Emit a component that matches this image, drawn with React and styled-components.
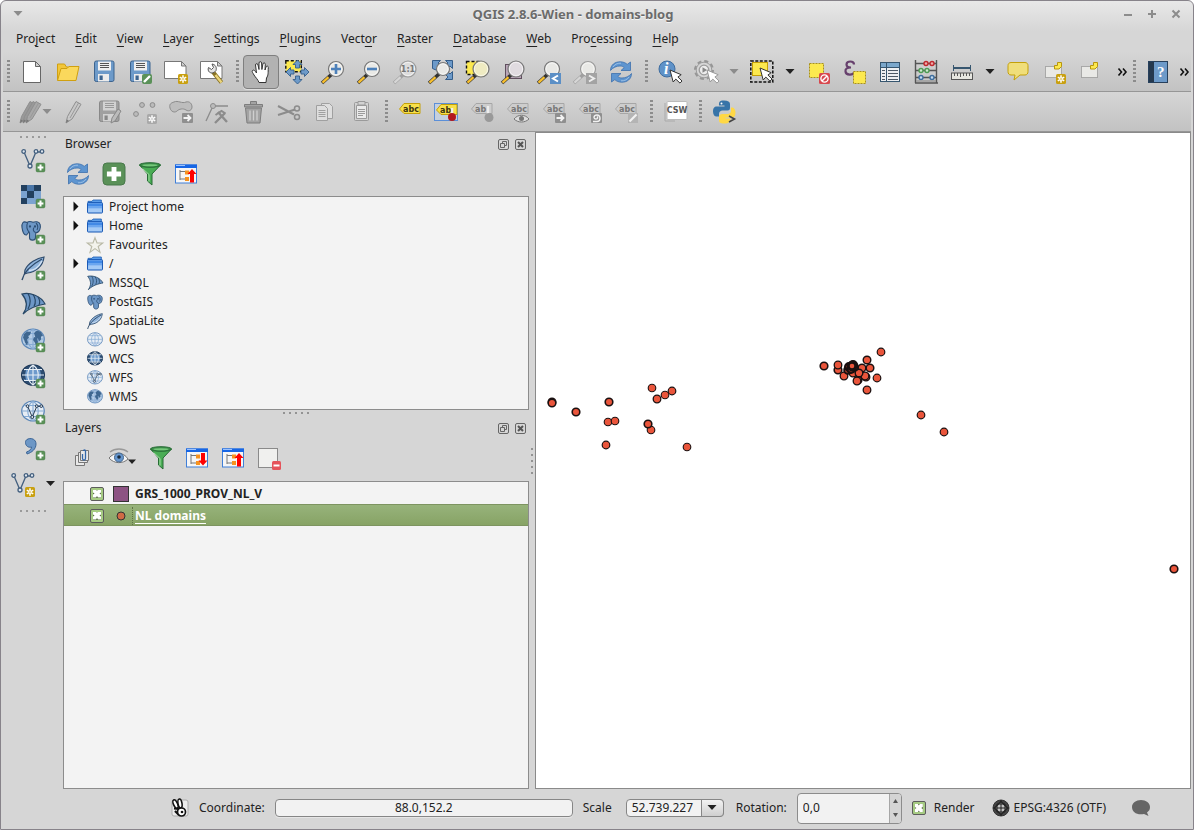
import React, { useState } from "react";
import styled, { createGlobalStyle } from "styled-components";

const GlobalStyle = createGlobalStyle`
  * {
    box-sizing: border-box;
  }

  body {
    margin: 0;
    background: #ffffff;
    color: #222222;
    font-family: "Noto Sans", sans-serif;
    font-size: 12px;
    line-height: 18px;
  }

  button,
  input,
  select {
    margin: 0;
    padding: 0;
    color: inherit;
    font: inherit;
  }
`;

const Window = styled.div`
  display: flex;
  flex-direction: column;
  min-height: 100vh;
  padding: 0 2px;
  border: 1px solid #87838a;
  border-radius: 6px 6px 0 0;
  background: linear-gradient(#e8e8e8, #d6d6d6 30px);
`;

const PlainButton = styled.button`
  display: flex;
  align-items: center;
  justify-content: center;
  border: none;
  background: none;
`;

const TitleBar = styled.header`
  display: flex;
  align-items: center;
  height: 25px;
  padding: 0 3px;
`;

const Title = styled.h1`
  flex: 1;
  margin: 0;
  color: #6b6b6b;
  font-size: 13px;
  font-weight: 700;
  line-height: 18px;
  text-align: center;
  text-shadow: 0 1px 0 #f4f4f4;
`;

const WindowButton = styled(PlainButton)`
  width: 24px;
  height: 24px;
`;

const MenuBar = styled.nav`
  display: flex;
  align-items: center;
  height: 26px;
  padding: 0 3px;
`;

const MenuButton = styled(PlainButton)`
  padding: 0 10px;

  u {
    text-underline-offset: 3px;
  }
`;

const Toolbar = styled.div`
  display: flex;
  align-items: center;
  gap: 2px;
  height: 40px;
  padding: 1px 2px 0 0;
  border-bottom: 1px solid #969696;
  background: linear-gradient(#d6d6d6, #c2c2c2);
`;

const ToolGroup = styled.div`
  display: flex;
  align-items: center;
`;

const GroupHandle = styled.span`
  width: 11px;
  height: 34px;
  padding: 5px 4px;
  background: repeating-linear-gradient(#8c8c8c 0 2px, transparent 2px 4px) content-box;
`;

const SideHandle = styled.span`
  width: 34px;
  height: 10px;
  padding: 4px;
  background: repeating-linear-gradient(90deg, #9a9a9a 0 2px, transparent 2px 6px) content-box;

  &:last-child {
    margin-top: 4px;
  }
`;

const ToolButton = styled(PlainButton)`
  width: ${(props) => props.$width || 36}px;
  height: 34px;
  border: 1px solid ${(props) => (props.$pressed ? "#7f7f7f" : "transparent")};
  border-radius: 4px;
  background: ${(props) => (props.$pressed ? "#b2b2b2" : "none")};
  box-shadow: ${(props) => (props.$pressed ? "0 1px 0 #dedede" : "none")};
`;

const MoreButton = styled(PlainButton)`
  justify-content: flex-end;
  width: ${(props) => (props.$short ? "14px" : "19px")};
  margin-left: ${(props) => (props.$short ? "auto" : "0")};
`;

const Svg = styled.svg`
  display: block;
  flex: none;
  width: ${(props) => props.$w || 24}px;
  height: ${(props) => props.$h || 24}px;
  overflow: visible;
`;

const Main = styled.main`
  display: flex;
  flex: 1;
`;

const SideBar = styled.aside`
  display: flex;
  flex-direction: column;
  align-items: center;
  width: 60px;
`;

const SideButton = styled(PlainButton)`
  width: 60px;
  height: 36px;
`;

const Docks = styled.div`
  display: flex;
  flex-direction: column;
  width: 466px;
`;

const Dock = styled.section`
  display: flex;
  flex-direction: column;
  flex: ${(props) => (props.$grow ? 1 : "none")};
`;

const DockTitle = styled.div`
  display: flex;
  align-items: center;
  gap: 6px;
  height: 24px;
  padding: 0 3px 0 2px;

  h2 {
    flex: 1;
    margin: 0;
    font-size: 12px;
    font-weight: 400;
  }
`;

const DockTools = styled.div`
  display: flex;
  align-items: center;
  gap: 6px;
  height: 36px;
  margin-bottom: ${(props) => (props.$inset ? "5px" : "4px")};
  padding-left: ${(props) => (props.$inset ? "4px" : "0")};
`;

const Tree = styled.ul`
  flex: ${(props) => (props.$grow ? 1 : "none")};
  margin: 0;
  padding: 0 0 3px;
  border: 1px solid #8c8c8c;
  background: #f3f3f3;
  list-style: none;
`;

const TreeRow = styled.li`
  display: flex;
  align-items: center;
  height: 19px;
  padding-left: 8px;
`;

const Expander = styled.span`
  display: flex;
  align-items: center;
  width: 15px;
`;

const TreeLabel = styled.span`
  padding-left: 6px;
`;

const LayerRow = styled.li`
  height: 22px;
  border: 1px solid ${(props) => (props.$selected ? "#7d9460" : "transparent")};
  border-width: 1px 0;
  background: ${(props) =>
    props.$selected ? "linear-gradient(#97b37b, #87a365)" : "none"};
  color: ${(props) => (props.$selected ? "#ffffff" : "#222222")};
  font-weight: 700;
  text-decoration: ${(props) => (props.$selected ? "underline" : "none")};
  text-underline-offset: 3px;

  label {
    display: flex;
    align-items: center;
    height: 21px;
    padding-left: 26px;
  }
`;

const LayerName = styled.span`
  flex: 1;
  padding-left: 2px;
  border-left: 1px dotted ${(props) => (props.$selected ? "#5f7346" : "transparent")};
`;

const Symbol = styled(Svg)`
  margin: 0 3px 0 9px;
`;

const CheckBox = styled.input`
  display: grid;
  flex: none;
  place-items: center;
  width: 14px;
  height: 14px;
  border: 1px solid #5c5c5c;
  border-radius: 2px;
  background: #a6cb83;
  appearance: none;

  &:checked::before {
    content: "";
    grid-area: 1 / 1;
    width: 8px;
    height: 8px;
    background: #5a6f45;
  }

  &:checked::after {
    content: "";
    grid-area: 1 / 1;
    width: 8px;
    height: 8px;
    background: #ffffff;
    clip-path: polygon(0 0, 38% 0, 50% 20%, 62% 0, 100% 0, 100% 38%, 80% 50%, 100% 62%, 100% 100%, 62% 100%, 50% 80%, 38% 100%, 0 100%, 0 62%, 20% 50%, 0 38%);
  }
`;

const RowSplitter = styled.div`
  display: flex;
  align-items: center;
  justify-content: center;
  height: 6px;
`;

const ColumnSplitter = styled.div`
  display: flex;
  align-items: center;
  justify-content: center;
  width: 6px;
`;

const SplitterDots = styled.span`
  width: ${(props) => (props.$vertical ? "2px" : "26px")};
  height: ${(props) => (props.$vertical ? "26px" : "2px")};
  background: repeating-linear-gradient(
    ${(props) => (props.$vertical ? "180deg" : "90deg")},
    #939393 0 2px,
    transparent 2px 6px
  );
`;

const MapCanvas = styled.section`
  flex: 1;
  min-width: 0;
  border: 1px solid #8a8a8a;
  background: #ffffff;

  svg {
    display: block;
    width: 100%;
    height: 100%;
  }
`;

const StatusBar = styled.footer`
  display: flex;
  align-items: center;
  justify-content: flex-end;
  gap: 10px;
  height: 40px;
  padding: 0 40px 2px 10px;

  label {
    white-space: nowrap;
  }
`;

const CoordinateInput = styled.input`
  width: 298px;
  height: 18px;
  border: 1px solid #868686;
  border-radius: 4px;
  background: #f2f2f2;
  box-shadow: 0 1px 0 #e6e6e6;
  text-align: center;
`;

const Combo = styled.div`
  display: grid;
  width: 98px;
  height: 18px;
  margin: 0 2px 0 4px;
`;

const ComboSelect = styled.select`
  grid-area: 1 / 1;
  width: 100%;
  height: 18px;
  padding-left: 5px;
  border: 1px solid #868686;
  border-radius: 4px;
  background: #f2f2f2;
  line-height: 16px;
  appearance: none;
`;

const ComboArrow = styled.span`
  display: grid;
  grid-area: 1 / 1;
  place-items: center;
  justify-self: end;
  width: 23px;
  height: 18px;
  border: 1px solid #868686;
  border-radius: 0 4px 4px 0;
  background: linear-gradient(#f2f2f2, #cfcfcf);
  pointer-events: none;
`;

const SpinBox = styled.div`
  display: flex;
  width: 105px;
  height: 31px;
  border: 1px solid #8c8c8c;
  border-radius: 4px;
  background: #f2f2f2;
  overflow: hidden;

  input {
    flex: 1;
    min-width: 0;
    padding-left: 5px;
    border: none;
    background: none;
  }
`;

const SpinButtons = styled.div`
  display: flex;
  flex-direction: column;
  width: 12px;
  border-left: 1px solid #a6a6a6;
  background: #d4d4d4;
`;

const SpinButton = styled(PlainButton)`
  flex: 1;
`;

const CheckLabel = styled.label`
  display: flex;
  align-items: center;
  gap: 8px;
`;

const StatusButton = styled(PlainButton)`
  gap: 4px;
  margin: ${(props) => (props.$spaced ? "0 15px 0 7px" : "0")};
`;

/* shared icon parts */

const PlusBadge = ({ x = 15, y = 15, size = 9 }) => (
  <g transform={`translate(${x} ${y}) scale(${size / 9})`}>
    <rect width="9" height="9" rx="1.6" fill="#5a9158" stroke="#47784a" strokeWidth=".4" />
    <path d="M4.5 1.6v5.800M1.600 4.500h5.800" stroke="#fff" strokeWidth="2" />
  </g>
);

const StarBadge = ({ x = 14, y = 14, gray }) => (
  <g transform={`translate(${x} ${y})`}>
    <rect width="10" height="10" rx="1.6" fill={gray ? "#a9a9a9" : "#c9a010"} />
    <path d="M5 1.3v7.4M1.8 3.1l6.4 3.8M8.2 3.1L1.8 6.9" stroke="#fff" strokeWidth="1.5" />
    <circle cx="5" cy="5" r=".8" fill={gray ? "#a9a9a9" : "#c9a010"} />
  </g>
);

const Cursor = ({ x, y, gray }) => (
  <path
    transform={`translate(${x} ${y})`}
    d="M0 0l3.2 12 2.6-2.9 4.2 4 2-2.1-4.1-4 3.3-2.3z"
    fill="#fff"
    stroke={gray ? "#9a9a9a" : "#333"}
    strokeWidth="1"
    strokeLinejoin="round"
  />
);

const Lens = ({ cx = 15, cy = 9, r = 7.5, gray, fill = "#e9e9e6" }) => (
  <g>
    <path
      d={`M${cx - 4} ${cy + 5}L${cx - 14} ${cy + 14}`}
      stroke={gray ? "#a0a0a0" : "#333"}
      strokeWidth="3.6"
    />
    <path
      d={`M${cx - 7.5} ${cy + 8.2}L${cx - 13.5} ${cy + 13.6}`}
      stroke={gray ? "#d6d6d6" : "#f8bf2c"}
      strokeWidth="2.4"
    />
    <circle cx={cx} cy={cy} r={r} fill={fill} stroke={gray ? "#9b9b9b" : "#777"} strokeWidth="1.2" />
    <circle cx={cx} cy={cy} r={r - 1.4} fill="none" stroke="#fff" strokeOpacity=".6" />
  </g>
);

const Refresh = () => (
  <g fill="#5e95d0" stroke="#3c70ad" strokeWidth=".8" strokeLinejoin="round">
    <path d="M1.5 10.5C1.5 4.8 6 1.8 11 1.8c3.2 0 5.6 1 7.2 2.6L21.5 2v8.5H12l3.2-2.9C14 6.4 12.7 6 11 6 7.4 6 4 7.5 1.5 10.5z" />
    <path d="M22.5 13.5c0 5.7-4.5 8.7-9.5 8.7-3.2 0-5.6-1-7.2-2.6L2.5 22v-8.5H12l-3.2 2.9c1.2 1.2 2.5 1.6 4.2 1.6 3.6 0 7-1.5 9.5-4.5z" />
    <path d="M4 7C6 4 9 3 12 3.2M20 17c-2 3-5 4-8 3.8" fill="none" stroke="#a9c9ea" />
  </g>
);

const Floppy = ({ gray }) => (
  <g>
    <rect x="2.5" y="1" width="19.5" height="20.5" rx="1.8" fill={gray ? "#a0a0a0" : "#6d9ac9"} stroke={gray ? "#888" : "#3d648f"} />
    <rect x="6" y="1.5" width="13" height="9" fill={gray ? "#d2d2d2" : "#f0f0f0"} />
    <path d="M8 3.500h9M8 5.500h9M8 7.500h9" stroke={gray ? "#999" : "#555"} />
    <rect x="6" y="14" width="11" height="7.5" fill={gray ? "#d2d2d2" : "#ececec"} />
    <rect x="7.5" y="15.5" width="3.2" height="4.5" fill={gray ? "#888" : "#3d648f"} />
  </g>
);

const Pencil = ({ x = 0, fill = "#c8c8c8" }) => (
  <g transform={`translate(${x} 0)`}>
    <path d="M2 23l1.500-6.500L12 1.500l5 2.800L8 19z" fill={fill} stroke="#8f8f8f" />
    <path d="M14.500 3L6 18" stroke="#999" />
    <path d="M2 23l.8-3.500 2.200 1.300z" fill="#777" />
  </g>
);

const Vertices = ({ x = 0, y = 0, color = "#44607f", scale = 1 }) => (
  <g transform={`translate(${x} ${y}) scale(${scale})`} fill="#dfe6ee" stroke={color} strokeWidth="1.3">
    <path d="M3 4l6 14 6-14h6" fill="none" />
    <circle cx="2.7" cy="3.5" r="1.8" />
    <circle cx="9" cy="18" r="2" />
    <circle cx="15" cy="3.5" r="1.8" />
    <circle cx="21" cy="3.5" r="1.8" />
  </g>
);

const Globe = ({ dark, land, vertices }) => (
  <g>
    <ellipse
      cx="12"
      cy="11"
      rx="11.3"
      ry="10"
      fill={dark ? "#6d9acb" : land ? "#b5cce5" : "#e6edf5"}
      stroke={dark ? "#1f3a5a" : "#5e88b8"}
      strokeWidth={dark ? 1.5 : 1.2}
    />
    {dark && <path d="M5 3.500Q12-1 19 3.500L21 6H3zM3 16h18l-2 2.500Q12 23 5 18.500zM1 7l4-1-1 5 1 5-4-2zM23 7l-4-1 1 5-1 5 4-2z" fill="#2c4c70" />}
    <path
      d="M1 11h22M3 5.500h18M3 16.500h18M12 1v20M12 1C5 6 5 16 12 21M12 1c7 5 7 15 0 20"
      fill="none"
      stroke={dark ? "#e6eef6" : "#86abd4"}
      strokeWidth="1.1"
    />
    {land && (
      <path
        d="M3 6l3-2.500 4 .5-1 3-2 1 1 1.500-2 2 1 3-1 3-2-3-1-3-1-2zM13 5l3-2.500 4 1.500 2 4-2 .5 0 3-2 2-1-3-2 0-1-2zM13 9l3 1 1 4-2 3-1.500-3-1.500-2z"
        fill="#3f6790"
      />
    )}
    {vertices && <Vertices x={4.5} y={3.5} scale={0.75} color="#22384f" />}
  </g>
);

const Elephant = () => (
  <g fill="#6d97c6" stroke="#2d4f75" strokeWidth="1.1" strokeLinejoin="round">
    <path d="M6 2.500C2 .5 .5 3.500 1 7.500s2 8 4.500 7.500L8 12l.5 1v4.500c0 3.500 6 3.500 6 0l.3-5c2 .5 3-.5 4-3C20 6 19.500 2.500 16 1.800c-2-.3-3 0-4 .5-2-1-4.500-1-6 .200z" />
    <path d="M6.500 3C5 6 6 10 8 12M14.500 12.500c-2-1-3-3-1.500-5M15 3c2 2 2 5 1 7" fill="none" />
    <circle cx="9" cy="6.500" r=".6" fill="#1f3a5a" />
    <circle cx="14" cy="6.500" r=".6" fill="#1f3a5a" />
  </g>
);

const Feather = () => (
  <g>
    <path d="M23 1C16 2 7 7 4 14l-.5 4 3-1C14 16 22 11 23 1z" fill="#8fb3db" stroke="#2f4b6b" strokeWidth="1.2" />
    <path d="M1 24c2-8 9-15 20-21" fill="none" stroke="#2f4b6b" strokeWidth="1.4" />
    <path d="M8 14.500c5 0 10-4 13-9.500" fill="none" stroke="#d5e3f2" strokeWidth="1.3" />
  </g>
);

const Sail = () => (
  <g fill="#6d97c6" stroke="#274766" strokeWidth="1.2">
    <path d="M1 2c8-2 19 2 23 10-6 1-15 3-22 10 5-7 4-14-1-20z" />
    <path d="M7 1.500c3 5 3 10 0 15.500M12 2.500c3 4 3 8 1 12M17 5c2 3 2 6 1 8" fill="none" />
  </g>
);

const Funnel = () => (
  <g stroke="#276b35" strokeLinejoin="round">
    <path d="M1.500 3l8 9v7l4.500 4V12l8.500-9z" fill="#4aad55" />
    <path d="M4.500 6.500l6.500 6v7" fill="none" stroke="#a6dea6" />
    <ellipse cx="12" cy="3" rx="10.5" ry="2.3" fill="#3c8f49" />
    <ellipse cx="12" cy="3.2" rx="7.5" ry="1" fill="#77c97c" stroke="none" />
  </g>
);

const PanelTree = ({ up }) => (
  <g>
    <rect x="1.5" y="3" width="21" height="18" fill="#f6f6f6" stroke="#3f7fd8" />
    <path d="M1 2.500h22v3.500H1z" fill="#1766e5" />
    <path d="M2 3.500h9" stroke="#9cc3ff" />
    <path d="M6 8v10M6 9.500h5M6 17h5" fill="none" stroke="#777" />
    <path d="M11 8.500h4v4h-4zM11 15h4v4h-4z" fill="#f7931e" />
    {up ? (
      <path d="M18 7l4.500 5H20v8.500h-4V12h-2.500z" fill="#f00" />
    ) : (
      <path d="M18 19.500l4.500-5H20V7h-4v7.500h-2.500z" fill="#f00" />
    )}
  </g>
);

const Tag = ({ gray, label = "abc" }) => (
  <g>
    <path
      d="M1.500 9L6 3.500h16v10H6z"
      fill={gray ? "#cdcdcd" : "#f7e04a"}
      stroke={gray ? "#a6a6a6" : "#c4a008"}
      strokeLinejoin="round"
    />
    <text x="5" y="11.500" fontFamily="DejaVu Sans, sans-serif" fontSize="8" fontWeight="700" fill={gray ? "#777" : "#3a3410"}>
      {label}
    </text>
  </g>
);

const GrayBadge = ({ children }) => (
  <g transform="translate(13 13)">
    <rect width="11" height="10" rx="1" fill="#8f8f8f" />
    <g fill="none" stroke="#f2f2f2" strokeWidth="1.8">
      {children}
    </g>
  </g>
);

const YellowPatch = ({ x, y, size }) => (
  <rect x={x} y={y} width={size} height={size} fill="#fce94f" stroke="#a8911a" strokeDasharray="2 1" />
);

const NoteBox = () => (
  <g>
    <rect x="3.5" y="6.5" width="16" height="11" fill="#e9e9e6" stroke="#777" strokeDasharray="1 1" />
    <path d="M12.500 5.500h3v-3h4v4l-2.500 2.500h-4.500z" fill="#fce94f" stroke="#b8960c" />
  </g>
);

const icons = {
  newFile: <path d="M3.500 1.500h12l5 5v16h-17zM15.500 1.500v5h5" fill="#fff" stroke="#666" />,
  open: (
    <g stroke="#d0a010">
      <path d="M1.500 20V4h7l2 3h9v3z" fill="#f2c63a" />
      <path d="M1.500 20.500L5 8.500h6l2-2h10l-3 14z" fill="#fad85c" />
    </g>
  ),
  save: <Floppy />,
  saveAs: (
    <g>
      <Floppy />
      <rect x="14" y="14" width="10" height="10" rx="2" fill="#5a9158" />
      <path d="M16 22l6-6" stroke="#fff" strokeWidth="2.4" />
    </g>
  ),
  composer: (
    <g>
      <path d="M.5 1.500h17L22 6v12.500H.5zM17.500 1.500V6H22" fill="#fff" stroke="#777" />
      <StarBadge />
    </g>
  ),
  composerManager: (
    <g>
      <path d="M.5 1.500h17L22 6v12.500H.5zM17.500 1.500V6H22" fill="#fff" stroke="#777" />
      <path d="M13 12l8.500 10.500" stroke="#8a7425" strokeWidth="4.2" />
      <path d="M15.500 15l6 7.500" stroke="#ecd57a" strokeWidth="2.4" />
      <path d="M8.500 7.500c-1.500 4 2 6.500 5.500 5l2-2c1-3-.5-6-4-6.500l1.500 3.500-2 2z" fill="#e4e4e4" stroke="#555" />
    </g>
  ),
  hand: (
    <path
      d="M10 22.500c-1-3-3.500-5-5-7.500-1-2-2.500-3.500-1.500-4.500s2.500 0 4 2.500L6.500 5c0-1.800 2.300-1.800 2.500 0l1 4.500V3c0-1.800 2.500-1.800 2.600 0l.3 6.500 1-5.500c.2-1.600 2.500-1.400 2.400.2L16 10l1-3c.5-1.500 2.500-1 2.300.5C19 13 19.500 15 17.500 18l-.5 4.500z"
      fill="#fff"
      stroke="#333"
      strokeLinejoin="round"
    />
  ),
  panSelection: (
    <g>
      <rect x=".8" y=".8" width="15.5" height="11" fill="#fce94f" stroke="#111" strokeWidth="1.4" strokeDasharray="3 2" />
      <path
        d="M12.500 0L17 4.500h-2.500V8h-4V4.500H8zM12.500 24l4.500-4.500h-2.500V16h-4v3.500H8zM1 12l4.500-4.500V10H9v4H5.500v2.500zM24 12l-4.500-4.500V10H16v4h3.500v2.500z"
        fill="#6d9ac9"
        stroke="#345d8a"
        strokeWidth=".9"
      />
    </g>
  ),
  zoomIn: (
    <g>
      <Lens />
      <path d="M15 4v10M10 9h10" stroke="#4c80ba" strokeWidth="2.6" />
    </g>
  ),
  zoomOut: (
    <g>
      <Lens />
      <path d="M10 9h10" stroke="#4c80ba" strokeWidth="2.6" />
    </g>
  ),
  zoomNative: (
    <g>
      <Lens gray r={8} fill="#dcdcdc" />
      <text x="15" y="12" textAnchor="middle" fontFamily="DejaVu Sans, sans-serif" fontSize="8" fontWeight="700" fill="#777">
        1:1
      </text>
    </g>
  ),
  zoomFull: (
    <g>
      <path
        d="M3.500.5h8L9 3l5 5 5-5-2.500-2.500h7v8L21 6l-4 4 4 4 2.500-2.500v8h-7L19 17l-5-5-7-2-3.500-1.500z"
        fill="#6d9ac9"
        stroke="#345d8a"
      />
      <Lens cx={14} r={6.5} />
    </g>
  ),
  zoomSelection: (
    <g>
      <rect x="1.5" y="1.5" width="13" height="13" fill="#fce94f" stroke="#111" strokeWidth="1.4" strokeDasharray="3 2" />
      <Lens cx={16} r={8} fill="#efebc2" />
    </g>
  ),
  zoomLayer: (
    <g>
      <rect x="4.5" y="4.5" width="16" height="14" fill="#b9a6b8" stroke="#5f4f5e" />
      <Lens r={8} fill="#e0dbe0" />
    </g>
  ),
  zoomLast: (
    <g>
      <Lens />
      <rect x="13" y="13" width="11" height="11" fill="#5b8fc6" />
      <path d="M21 15.500l-5 3 5 3" fill="none" stroke="#fff" strokeWidth="2" />
    </g>
  ),
  zoomNext: (
    <g>
      <Lens gray />
      <rect x="13" y="13" width="11" height="11" fill="#a3a3a3" />
      <path d="M16 15.500l5 3-5 3" fill="none" stroke="#eee" strokeWidth="2" />
    </g>
  ),
  refresh: <Refresh />,
  identify: (
    <g>
      <circle cx="9" cy="9" r="8" fill="#5f92c8" stroke="#3f6d9f" />
      <text x="6" y="14" fontFamily="Liberation Serif, serif" fontSize="16" fontStyle="italic" fontWeight="700" fill="#fff">
        i
      </text>
      <Cursor x={12} y={10} />
    </g>
  ),
  action: (
    <g>
      <circle cx="10" cy="10" r="8.8" fill="none" stroke="#969696" strokeWidth="2.4" strokeDasharray="4 2.910" />
      <circle cx="10" cy="10" r="7.8" fill="#d6d6d6" stroke="#9c9c9c" />
      <circle cx="10" cy="10" r="4.8" fill="#ececec" stroke="#9c9c9c" strokeWidth="1.3" />
      <path d="M8.500 7.200l4.500 2.800-4.500 2.800z" fill="#888" />
      <Cursor x={13} y={10} gray />
    </g>
  ),
  select: (
    <g>
      <rect x=".8" y="1" width="22" height="21" fill="none" stroke="#111" strokeWidth="1.5" strokeDasharray="3 1.5" />
      <rect x="2.5" y="2.5" width="15" height="13" fill="#fce94f" stroke="#c4a008" />
      <Cursor x={10} y={8} />
    </g>
  ),
  deselect: (
    <g>
      <YellowPatch x={3.5} y={3.5} size={14} />
      <rect x="13" y="13" width="11" height="11" rx="1.5" fill="#d8484e" />
      <circle cx="18.5" cy="18.5" r="3.6" fill="none" stroke="#fff" strokeWidth="1.4" />
      <path d="M16 21l5-5" stroke="#fff" strokeWidth="1.4" />
    </g>
  ),
  expression: (
    <g>
      <path
        d="M12 4.500c0-4-7.500-4-7.500 0 0 2 2 3 4.500 3-3.500 0-6 1-5.500 4 .5 4 7.500 4 9 .5"
        fill="none"
        stroke="#67406d"
        strokeWidth="2.2"
      />
      <YellowPatch x={11.5} y={11.5} size={12} />
    </g>
  ),
  table: (
    <g>
      <rect x="2.5" y="2.5" width="19" height="19" fill="#eef0f2" stroke="#37566f" />
      <path d="M3 3h18v4H3z" fill="#7ba8cc" />
      <path d="M3 7.500h18M8.500 3v18" stroke="#37566f" />
      <path
        d="M4 10.500h3M10 10.500h10M4 13.500h3M10 13.500h10M4 16.500h3M10 16.500h10M4 19.500h3M10 19.500h10"
        stroke="#4e5a66"
      />
    </g>
  ),
  abacus: (
    <g fill="none" stroke="#555" strokeWidth="1.4">
      <path d="M1.500 0v23M22.500 0v23M1 23h23M2 3.500h20M2 10.500h20M2 17.500h20" />
      <circle cx="12" cy="3.5" r="2" fill="#eaa" stroke="#c0282d" />
      <circle cx="18" cy="3.5" r="2" fill="#eaa" stroke="#c0282d" />
      <circle cx="7" cy="10.5" r="2" fill="#cfe8cf" stroke="#4f9c55" />
      <circle cx="13" cy="10.5" r="2" fill="#cfe8cf" stroke="#4f9c55" />
      <circle cx="7" cy="17.5" r="2" fill="#c6dcf0" stroke="#3f6f9f" />
      <circle cx="18" cy="17.5" r="2" fill="#c6dcf0" stroke="#3f6f9f" />
      <path d="M2 21h20" stroke="#999" />
    </g>
  ),
  ruler: (
    <g>
      <path d="M3.500 5v6M20.500 5v6" stroke="#37566f" />
      <path d="M3.500 8h17" stroke="#37566f" strokeWidth="2" />
      <rect x="1.5" y="13" width="21" height="6.5" fill="#e6e6e0" stroke="#555" />
      <path d="M4.500 13v3M7.500 13v3M10.500 13v4M13.500 13v3M16.500 13v3M19.500 13v3" stroke="#555" />
    </g>
  ),
  bubble: (
    <path
      d="M5 2.500h14c2 0 3 1.500 3 3v6c0 2-1 3.500-3 3.500h-5L8 20l1-5H5c-2 0-3-1.500-3-3.500v-6c0-1.500 1-3 3-3z"
      fill="#f0de7a"
      stroke="#c4a008"
    />
  ),
  noteNew: (
    <g>
      <NoteBox />
      <StarBadge />
    </g>
  ),
  note: <NoteBox />,
  help: (
    <g>
      <rect x="2.5" y="1.5" width="19" height="21" fill="#6d9ac9" stroke="#27405c" />
      <rect x="3" y="2" width="5" height="20" fill="#24384e" />
      <text x="11" y="17" fontFamily="Liberation Serif, serif" fontSize="15" fontWeight="700" fill="#fff">
        ?
      </text>
    </g>
  ),
  edits: (
    <g>
      <Pencil fill="#999" />
      <Pencil x={3} fill="#999" />
      <Pencil x={6} fill="#a8a8a8" />
    </g>
  ),
  edit: <Pencil x={3} />,
  saveEdits: (
    <g>
      <Floppy gray />
      <path d="M14 23l1-5 6-9 3 2-6 10z" fill="#bbb" stroke="#888" />
    </g>
  ),
  addPoints: (
    <g>
      <g fill="#bbb" stroke="#8c8c8c">
        <circle cx="9" cy="5" r="2.4" />
        <circle cx="19.500" cy="5" r="2.4" />
        <circle cx="3" cy="14" r="2.4" />
      </g>
      <StarBadge gray />
    </g>
  ),
  moveFeature: (
    <g>
      <path
        d="M5 2c4-2 8 2 12 0 4-1 6 2 6 5s-3 5-6 3-7-1-9 1-6 1-7-3 1-5 4-6z"
        fill="#bdbdbd"
        stroke="#8c8c8c"
      />
      <GrayBadge>
        <path d="M1.500 5h6M5.500 2l3 3-3 3" />
      </GrayBadge>
    </g>
  ),
  nodeTool: (
    <g fill="none" stroke="#8c8c8c">
      <path d="M1 21L8 6h15" strokeWidth="1.3" />
      <circle cx="8" cy="6" r="2.5" fill="#bbb" />
      <path d="M10 23l10-10M13 12l9 10" strokeWidth="2.4" />
      <path d="M10.500 15l6-4 4 2.500" strokeWidth="2" />
    </g>
  ),
  trash: (
    <g fill="#a3a3a3" stroke="#7d7d7d">
      <path d="M4.500 8h16L19 23H6z" />
      <path d="M3.500 4.500h18V7h-18zM9.500 4V1.500h6V4" />
      <path d="M9 10.500v10M12.500 10.500v10M16 10.500v10" stroke="#d0d0d0" strokeWidth="1.3" />
    </g>
  ),
  cut: (
    <g fill="none" stroke="#8c8c8c" strokeWidth="1.5">
      <path d="M1 6l16 8.500M1 15l17-5.500" strokeWidth="2" />
      <circle cx="20" cy="8.5" r="2.5" />
      <circle cx="20" cy="17" r="2.5" />
    </g>
  ),
  copy: (
    <g fill="#dedede" stroke="#a0a0a0">
      <path d="M8.500 3.500h8l3 3v12h-11z" />
      <path d="M3.500 5.500h8l3 3v12h-11zM5.500 10.500h7M5.500 12.500h7M5.500 14.500h7M5.500 16.500h7" />
    </g>
  ),
  paste: (
    <g fill="#d2d2d2" stroke="#9a9a9a">
      <rect x="5.5" y="2.5" width="14" height="18" rx="1" />
      <path d="M7.500 5.500h10v13h-10z" fill="#eaeaea" />
      <path d="M9 1.500h7V5H9zM9 9.500h7M9 11.500h7M9 13.500h7M9 15.500h5" />
    </g>
  ),
  label: <Tag />,
  labelPin: (
    <g>
      <rect x=".5" y="3.5" width="23" height="17" fill="#c5d0de" stroke="#5b8fd8" />
      <g transform="translate(1 1)">
        <Tag label="ab" />
      </g>
      <path d="M18 8v8" stroke="#eee" strokeWidth="2.4" />
      <circle cx="18" cy="17" r="4" fill="#b3181c" />
    </g>
  ),
  labelPinGray: (
    <g>
      <Tag gray label="ab" />
      <path d="M18 6v9" stroke="#eee" strokeWidth="2.4" />
      <circle cx="19" cy="17.5" r="4.5" fill="#999" />
    </g>
  ),
  labelEye: (
    <g>
      <Tag gray />
      <path d="M8 19c4-5 11-5 15 0-4 4-11 4-15 0z" fill="#ddd" stroke="#777" />
      <circle cx="15.5" cy="18.5" r="2.5" fill="#777" />
    </g>
  ),
  labelMove: (
    <g>
      <Tag gray />
      <GrayBadge>
        <path d="M1.500 5h6M5.500 2l3 3-3 3" />
      </GrayBadge>
    </g>
  ),
  labelRotate: (
    <g>
      <Tag gray />
      <GrayBadge>
        <path d="M2 8.500h4c4 0 4-6.500 0-6.500-3.500 0-4 4-1 4 2 0 2-1.500 1-2.500" strokeWidth="1.4" />
      </GrayBadge>
    </g>
  ),
  labelEdit: (
    <g>
      <Tag gray />
      <rect x="14" y="13" width="10" height="10" fill="#b4b4b4" />
      <path d="M15.500 21.500l7-7" stroke="#f2f2f2" strokeWidth="2.2" />
    </g>
  ),
  csw: (
    <g>
      <path d="M2 3v18h10" fill="none" stroke="#aaa" />
      <rect x="4" y="1.5" width="20" height="18" rx="1" fill="#fff" stroke="#bbb" />
      <text x="14" y="13" textAnchor="middle" fontFamily="DejaVu Sans, sans-serif" fontSize="8" fontWeight="700" fill="#555">
        CSW
      </text>
    </g>
  ),
  python: (
    <g>
      <path
        d="M12 .5c-5 0-5 1.500-5 5h5.500v1H5c-3 0-4 2-4 5s1.500 5 3.500 5H7V14c0-2 1.500-3.500 3.500-3.500h5c2 0 2.500-1 2.500-3V4c0-2-2-3.500-6-3.500z"
        fill="#3774a8"
      />
      <circle cx="9.5" cy="3.5" r="1" fill="#fff" />
      <path
        d="M12.500 23.500c-5 0-5.500-1.500-5.500-3.500v-3c0-2 1.500-3 3.500-3h5c2 0 3.500-1 3.500-3.500V7.500h1c2 0 3.500 2 3.500 5s-1 5-4 5h-6v1h5c0 3-2 5-6 5z"
        fill="#ffd845"
      />
      <path d="M17 16l5.500 3-5.500 3" fill="none" stroke="#444" strokeWidth="1.6" />
    </g>
  ),
  vector: (
    <g>
      <Vertices />
      <PlusBadge />
    </g>
  ),
  raster: (
    <g>
      <rect x="0" y="1" width="20" height="19" fill="#7ba3d0" />
      <path d="M0 1h6v6H0zM13 1h7v6h-7zM6 7h7v7H6zM0 14h6v6H0z" fill="#22405f" />
      <path d="M6 1h7v6H6z" fill="#4a76a8" />
      <PlusBadge />
    </g>
  ),
  postgis: (
    <g>
      <Elephant />
      <PlusBadge />
    </g>
  ),
  spatialite: (
    <g>
      <Feather />
      <PlusBadge />
    </g>
  ),
  mssql: (
    <g>
      <Sail />
      <PlusBadge />
    </g>
  ),
  wms: (
    <g>
      <Globe land />
      <PlusBadge />
    </g>
  ),
  wcs: (
    <g>
      <Globe dark />
      <PlusBadge />
    </g>
  ),
  wfs: (
    <g>
      <Globe vertices />
      <PlusBadge />
    </g>
  ),
  csv: (
    <g>
      <path
        d="M4.500 6.500C4 1.500 15 .5 15 8c0 5-4 8.500-9 10L5.500 16c3-1 5-3 5-5-3 1-6-1-6-4.500z"
        fill="#6d97c6"
        stroke="#3c6596"
      />
      <PlusBadge />
    </g>
  ),
  newLayer: (
    <g>
      <Vertices />
      <StarBadge y={15} />
    </g>
  ),
  addLayer: <PlusBadge x={1} y={1} size={22} />,
  filter: <Funnel />,
  collapse: <PanelTree up />,
  expand: <PanelTree />,
  group: (
    <g fill="#e8e8e8" stroke="#777">
      <path d="M5.500 9.500h9v10h-9z" />
      <path d="M8.500 6.500h9v10h-9z" />
      <path d="M10.500 4.500h8v10h-8z" />
      <path d="M12.500 8v4.500c0 2 3 2 3 0V5c0-1.500-2-1.500-2 0" fill="none" stroke="#3467a8" strokeWidth="1.3" />
    </g>
  ),
  eye: (
    <g>
      <path d="M-1 12c5-6 14-7 19 1-5 5-14 5-19-1z" fill="#f5f5f5" stroke="#777" />
      <path d="M0 6c5-4 13-4 18 0" fill="none" stroke="#999" strokeWidth="1.3" />
      <circle cx="9" cy="11.5" r="4.5" fill="#6697cf" stroke="#44658a" />
      <circle cx="9" cy="11" r="1.8" fill="#1a2a3c" />
      <path d="M18 13.500h8L22 18z" fill="#222" />
    </g>
  ),
  removeLayer: (
    <g>
      <rect x="1.5" y="2.5" width="19" height="19" fill="#f0f0ee" stroke="#8a8a8a" />
      <rect x="15" y="15" width="9" height="9" rx="1.5" fill="#e5535a" />
      <path d="M16.500 19.500h6" stroke="#fff" strokeWidth="2" />
    </g>
  ),
};

const treeIcons = {
  folder: (
    <g>
      <path d="M1.500 6V3.500h6l1.500-2h12.500V6z" fill="#5a9dea" stroke="#1c5cb0" strokeWidth="1.2" />
      <rect x=".8" y="5.500" width="22.4" height="15.500" rx="1" fill="#a4caf6" stroke="#1556b4" strokeWidth="1.5" />
      <path d="M1.500 6.500h21v4h-21z" fill="#4189e6" />
      <path d="M1.500 10.500h21v3.500h-21z" fill="#6ba6ef" />
    </g>
  ),
  star: (
    <path
      d="M12 1l3 8h8.500l-6.700 5.200L19.500 23 12 17.500 4.500 23l2.700-8.800L.5 9H9z"
      fill="#f3f3ec"
      stroke="#b9b9a6"
      strokeWidth="1.7"
    />
  ),
  sail: <Sail />,
  elephant: (
    <g transform="scale(1.18 1.12)">
      <Elephant />
    </g>
  ),
  feather: <Feather />,
  ows: <Globe />,
  wcs: <Globe dark />,
  wfs: <Globe vertices />,
  wms: <Globe land />,
};

const Icon = ({ name }) => (
  <Svg viewBox="0 0 24 24" aria-hidden="true">
    {icons[name]}
  </Svg>
);

const DownArrow = ({ gray }) => (
  <Svg $w={10} $h={6} viewBox="0 0 10 6" aria-hidden="true">
    <path d="M.5 0h9L5 5z" fill={gray ? "#8c8c8c" : "#222"} />
  </Svg>
);

const Chevrons = () => (
  <Svg $w={9} $h={8} viewBox="0 0 9 8" aria-hidden="true">
    <path d="M.5.5l3 3.500-3 3.500M5 .5L8 4 5 7.500" fill="none" stroke="#111" strokeWidth="1.6" />
  </Svg>
);

const menus = [
  ["Pro", "j", "ect"],
  ["", "E", "dit"],
  ["", "V", "iew"],
  ["", "L", "ayer"],
  ["", "S", "ettings"],
  ["", "P", "lugins"],
  ["Vect", "o", "r"],
  ["", "R", "aster"],
  ["", "D", "atabase"],
  ["", "W", "eb"],
  ["Pro", "c", "essing"],
  ["", "H", "elp"],
];

const fileTools = ["newFile", "open", "save", "saveAs", "composer", "composerManager"];
const zoomTools = [
  "hand",
  "panSelection",
  "zoomIn",
  "zoomOut",
  "zoomNative",
  "zoomFull",
  "zoomSelection",
  "zoomLayer",
  "zoomLast",
  "zoomNext",
  "refresh",
];
const attributeTools = [
  "identify",
  "action",
  "menu:gray",
  "select",
  "menu:select",
  "deselect",
  "expression",
  "table",
  "abacus",
  "ruler",
  "menu:ruler",
  "bubble",
  "noteNew",
  "note",
];
const editTools = [
  "edit",
  "saveEdits",
  "addPoints",
  "moveFeature",
  "nodeTool",
  "trash",
  "cut",
  "copy",
  "paste",
];
const labelTools = [
  "label",
  "labelPin",
  "labelPinGray",
  "labelEye",
  "labelMove",
  "labelRotate",
  "labelEdit",
];
const sideTools = ["vector", "raster", "postgis", "spatialite", "mssql", "wms", "wcs", "wfs", "csv"];

const browserItems = [
  { label: "Project home", icon: "folder", open: true },
  { label: "Home", icon: "folder", open: true },
  { label: "Favourites", icon: "star" },
  { label: "/", icon: "folder", open: true },
  { label: "MSSQL", icon: "sail" },
  { label: "PostGIS", icon: "elephant" },
  { label: "SpatiaLite", icon: "feather" },
  { label: "OWS", icon: "ows" },
  { label: "WCS", icon: "wcs" },
  { label: "WFS", icon: "wfs" },
  { label: "WMS", icon: "wms" },
];

// x, y, stroke width of the domain points on the map
const points = [
  [16, 269, 1.5], [16, 270, 1.5], [40, 279, 1.6], [73, 269, 1.6], [116, 255, 1.1],
  [121, 266, 1.3], [129, 262, 1.1], [136, 258, 1.2], [72, 289, 1.1], [79, 288, 1.1],
  [115, 297, 1.1], [112, 291, 1.6], [70, 312, 1.2], [151, 314, 1.1], [345, 219, 1.2],
  [288, 233, 1.6], [302, 237, 1.6], [302, 232, 1.3], [308, 243, 1.3], [331, 227, 1.4],
  [326, 235, 1.4], [330, 244, 1.3], [329, 243, 1.3], [334, 235, 1.5], [322, 247, 1.6],
  [321, 248, 1.3], [317, 240, 1.3], [323, 240, 1.4], [312, 237, 2], [313, 234, 2.4],
  [317, 232, 2.4], [318, 234, 2.6], [315, 236, 2.6], [316, 233, 3], [341, 245, 1.2],
  [331, 257, 1.3], [385, 282, 1.2], [408, 299, 1.2], [638, 436, 1.6],
];

const ToolButtons = ({ names }) =>
  names.map((name) =>
    name.startsWith("menu:") ? (
      <ToolButton key={name} $width={20} aria-label={name}>
        <DownArrow gray={name === "menu:gray"} />
      </ToolButton>
    ) : (
      <ToolButton key={name} $pressed={name === "hand"} aria-label={name}>
        <Icon name={name} />
      </ToolButton>
    )
  );

const DockHeader = ({ title }) => (
  <DockTitle>
    <h2>{title}</h2>
    <PlainButton aria-label={`Float ${title}`}>
      <Svg $w={11} $h={11} viewBox="0 0 11 11" fill="none" stroke="#666">
        <rect x=".5" y=".5" width="10" height="10" rx="1.5" />
        <path d="M2.500 4.500h4v4h-4zM4.500 4.500v-2h4v4h-2" />
      </Svg>
    </PlainButton>
    <PlainButton aria-label={`Close ${title}`}>
      <Svg $w={11} $h={11} viewBox="0 0 11 11" fill="none" stroke="#666">
        <rect x=".5" y=".5" width="10" height="10" rx="1.5" />
        <path d="M3 3l5 5M8 3L3 8" stroke="#555" strokeWidth="2" />
      </Svg>
    </PlainButton>
  </DockTitle>
);

const App = () => {
  const [layers, setLayers] = useState({ provinces: true, domains: true });
  const [coordinate, setCoordinate] = useState("88.0,152.2");
  const [rotation, setRotation] = useState("0,0");
  const [render, setRender] = useState(true);

  const toggleLayer = (e) =>
    setLayers({ ...layers, [e.target.name]: e.target.checked });

  return (
    <>
      <GlobalStyle />
      <Window>
        <TitleBar>
          <WindowButton aria-label="Window menu">
            <DownArrow gray />
          </WindowButton>
          <Title>QGIS 2.8.6-Wien - domains-blog</Title>
          {["M1 6h8", "M1 5h8M5 1v8", "M1.500 1.500l7 7M8.500 1.500l-7 7"].map((d) => (
            <WindowButton key={d} aria-label="Window control">
              <Svg $w={10} $h={10} viewBox="0 0 10 10">
                <path d={d} stroke="#8c8c8c" strokeWidth="2" />
              </Svg>
            </WindowButton>
          ))}
        </TitleBar>
        <MenuBar>
          {menus.map(([before, key, after]) => (
            <MenuButton key={before + key + after}>
              <span>
                {before}
                <u>{key}</u>
                {after}
              </span>
            </MenuButton>
          ))}
        </MenuBar>
        <Toolbar>
          <ToolGroup>
            <GroupHandle />
            <ToolButtons names={fileTools} />
          </ToolGroup>
          <ToolGroup>
            <GroupHandle />
            <ToolButtons names={zoomTools} />
          </ToolGroup>
          <ToolGroup>
            <GroupHandle />
            <ToolButtons names={attributeTools} />
            <MoreButton aria-label="More attribute tools">
              <Chevrons />
            </MoreButton>
          </ToolGroup>
          <ToolGroup>
            <GroupHandle />
            <ToolButtons names={["help"]} />
          </ToolGroup>
          <MoreButton $short aria-label="More help tools">
            <Chevrons />
          </MoreButton>
        </Toolbar>
        <Toolbar>
          <ToolGroup>
            <GroupHandle />
            <ToolButton $width={41} aria-label="edits">
              <Icon name="edits" />
              <DownArrow gray />
            </ToolButton>
            <ToolButtons names={editTools} />
          </ToolGroup>
          <ToolGroup>
            <GroupHandle />
            <ToolButtons names={labelTools} />
          </ToolGroup>
          <ToolGroup>
            <GroupHandle />
            <ToolButtons names={["csw"]} />
          </ToolGroup>
          <ToolGroup>
            <GroupHandle />
            <ToolButtons names={["python"]} />
          </ToolGroup>
        </Toolbar>
        <Main>
          <SideBar>
            <SideHandle />
            {sideTools.map((name) => (
              <SideButton key={name} aria-label={name}>
                <Icon name={name} />
              </SideButton>
            ))}
            <SideButton aria-label="newLayer">
              <Icon name="newLayer" />
              <Svg $w={20} $h={6} viewBox="-11 0 20 6">
                <path d="M0 0h9L4.500 5z" fill="#222" />
              </Svg>
            </SideButton>
            <SideHandle />
          </SideBar>
          <Docks>
            <Dock>
              <DockHeader title="Browser" />
              <DockTools>
                {["refresh", "addLayer", "filter", "collapse"].map((name) => (
                  <ToolButton key={name} $width={30} aria-label={name}>
                    <Icon name={name} />
                  </ToolButton>
                ))}
              </DockTools>
              <Tree>
                {browserItems.map((item) => (
                  <TreeRow key={item.label}>
                    <Expander>
                      {item.open && (
                        <Svg $w={7} $h={11} viewBox="0 0 7 11">
                          <path d="M1.500.5v10l5-5z" fill="#111" />
                        </Svg>
                      )}
                    </Expander>
                    <Svg $w={16} $h={16} viewBox="0 0 24 24">
                      {treeIcons[item.icon]}
                    </Svg>
                    <TreeLabel>{item.label}</TreeLabel>
                  </TreeRow>
                ))}
              </Tree>
            </Dock>
            <RowSplitter>
              <SplitterDots />
            </RowSplitter>
            <Dock $grow>
              <DockHeader title="Layers" />
              <DockTools $inset>
                {["group", "eye", "filter", "expand", "collapse", "removeLayer"].map((name) => (
                  <ToolButton key={name} $width={name === "eye" ? 37 : 30} aria-label={name}>
                    <Icon name={name} />
                  </ToolButton>
                ))}
              </DockTools>
              <Tree $grow>
                <LayerRow>
                  <label>
                    <CheckBox
                      type="checkbox"
                      name="provinces"
                      checked={layers.provinces}
                      onChange={toggleLayer}
                    />
                    <Symbol $w={16} $h={16} viewBox="0 0 16 16">
                      <rect x=".5" y=".5" width="15" height="15" fill="#8d5383" stroke="#333" />
                    </Symbol>
                    <LayerName>GRS_1000_PROV_NL_V</LayerName>
                  </label>
                </LayerRow>
                <LayerRow $selected>
                  <label>
                    <CheckBox
                      type="checkbox"
                      name="domains"
                      checked={layers.domains}
                      onChange={toggleLayer}
                    />
                    <Symbol $w={16} $h={16} viewBox="0 0 16 16">
                      <circle cx="8" cy="8" r="4" fill="#cf6b45" stroke="#333" />
                    </Symbol>
                    <LayerName $selected>NL domains</LayerName>
                  </label>
                </LayerRow>
              </Tree>
            </Dock>
          </Docks>
          <ColumnSplitter>
            <SplitterDots $vertical />
          </ColumnSplitter>
          <MapCanvas aria-label="Map">
            <svg>
              {points.map(([x, y, width]) => (
                <circle
                  key={`${x}-${y}`}
                  cx={x}
                  cy={y}
                  r="3.8"
                  fill="#ea553b"
                  stroke="#1a1010"
                  strokeWidth={width}
                />
              ))}
            </svg>
          </MapCanvas>
        </Main>
        <StatusBar>
          <PlainButton aria-label="Toggle extents">
            <Svg $w={18} $h={18} viewBox="0 0 18 18">
              <rect x="1" y="1" width="16" height="16" rx="2" fill="#ececec" stroke="#aaa" />
              <ellipse cx="4.5" cy="5" rx="2" ry="4.5" transform="rotate(-25 4.5 5)" fill="#fff" stroke="#111" strokeWidth="1.6" />
              <ellipse cx="9" cy="4.5" rx="2" ry="4.5" transform="rotate(-10 9 4.5)" fill="#fff" stroke="#111" strokeWidth="1.6" />
              <path d="M3 9.500l10 1M4 12l4 4" stroke="#111" strokeWidth="2.2" />
              <circle cx="10.5" cy="13" r="4" fill="#fff" stroke="#111" strokeWidth="1.7" />
              <circle cx="11" cy="13" r="1.3" fill="#111" />
            </Svg>
          </PlainButton>
          <label htmlFor="coordinate">Coordinate:</label>
          <CoordinateInput
            id="coordinate"
            value={coordinate}
            onChange={(e) => setCoordinate(e.target.value)}
          />
          <label htmlFor="scale">Scale</label>
          <Combo>
            <ComboSelect id="scale">
              <option>52.739.227</option>
            </ComboSelect>
            <ComboArrow>
              <DownArrow />
            </ComboArrow>
          </Combo>
          <label htmlFor="rotation">Rotation:</label>
          <SpinBox>
            <input
              id="rotation"
              value={rotation}
              onChange={(e) => setRotation(e.target.value)}
            />
            <SpinButtons>
              <SpinButton aria-label="Increase rotation">
                <Svg $w={5} $h={4} viewBox="0 0 5 4">
                  <path d="M0 4h5L2.500 0z" fill="#555" />
                </Svg>
              </SpinButton>
              <SpinButton aria-label="Decrease rotation">
                <Svg $w={5} $h={4} viewBox="0 0 5 4">
                  <path d="M0 0h5L2.500 4z" fill="#555" />
                </Svg>
              </SpinButton>
            </SpinButtons>
          </SpinBox>
          <CheckLabel>
            <CheckBox
              type="checkbox"
              checked={render}
              onChange={(e) => setRender(e.target.checked)}
            />
            Render
          </CheckLabel>
          <StatusButton $spaced>
            <Svg $w={18} $h={18} viewBox="0 0 18 18" fill="none" stroke="#222">
              <circle cx="9" cy="9" r="8" fill="#444" stroke="#333" />
              <path d="M9 2.500L15.500 9 9 15.500 2.500 9z" fill="#c4c4c4" strokeWidth="1.3" />
              <path d="M9 1v16M1 9h16M5 5h8v8H5z" />
            </Svg>
            EPSG:4326 (OTF)
          </StatusButton>
          <StatusButton aria-label="Messages">
            <Svg $w={20} $h={18} viewBox="0 0 20 18">
              <path
                d="M10 1c5 0 9 3 9 7 0 2.500-1 4-3 5.500l1.500 3.500-4.500-2C6 16.500 1 13 1 8c0-4 4-7 9-7z"
                fill="#666"
              />
            </Svg>
          </StatusButton>
        </StatusBar>
      </Window>
    </>
  );
};

export default App;
